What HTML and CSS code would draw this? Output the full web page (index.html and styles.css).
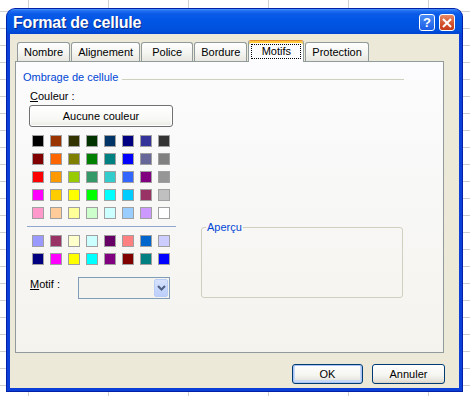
FILE: index.html
```html
<!DOCTYPE html>
<html lang="fr">
<head>
    <meta charset="UTF-8">
    <title>Format de cellule</title>
    <link rel="stylesheet" href="styles.css">
</head>
<body>
    <div class="dialog">
        <div class="titlebar">
            <span class="title">Format de cellule</span>
            <span class="tb-btn help">?</span>
            <span class="tb-btn close">
                <svg width="10" height="10" viewBox="0 0 10 10"><path d="M1 1 L9 9 M9 1 L1 9" stroke="#fff" stroke-width="2" fill="none"/></svg>
            </span>
        </div>
        <div class="content">
            <div class="tabs">
                <span class="tab">Nombre</span>
                <span class="tab">Alignement</span>
                <span class="tab">Police</span>
                <span class="tab">Bordure</span>
                <span class="tab active"><span class="focus">Motifs</span></span>
                <span class="tab">Protection</span>
            </div>
            <div class="panel">
                <div class="group-head"><span>Ombrage de cellule</span><i class="rule"></i></div>
                <div class="shade">
                    <div class="colors">
                        <div class="label"><u>C</u>ouleur :</div>
                        <button class="none-btn">Aucune couleur</button>
                        <div class="swatches">
                            <i style="background:#000000"></i><i style="background:#993300"></i><i style="background:#333300"></i><i style="background:#003300"></i><i style="background:#003366"></i><i style="background:#000080"></i><i style="background:#333399"></i><i style="background:#333333"></i>
                            <i style="background:#800000"></i><i style="background:#ff6600"></i><i style="background:#808000"></i><i style="background:#008000"></i><i style="background:#008080"></i><i style="background:#0000ff"></i><i style="background:#666699"></i><i style="background:#808080"></i>
                            <i style="background:#ff0000"></i><i style="background:#ff9900"></i><i style="background:#99cc00"></i><i style="background:#339966"></i><i style="background:#33cccc"></i><i style="background:#3366ff"></i><i style="background:#800080"></i><i style="background:#969696"></i>
                            <i style="background:#ff00ff"></i><i style="background:#ffcc00"></i><i style="background:#ffff00"></i><i style="background:#00ff00"></i><i style="background:#00ffff"></i><i style="background:#00ccff"></i><i style="background:#993366"></i><i style="background:#c0c0c0"></i>
                            <i style="background:#ff99cc"></i><i style="background:#ffcc99"></i><i style="background:#ffff99"></i><i style="background:#ccffcc"></i><i style="background:#ccffff"></i><i style="background:#99ccff"></i><i style="background:#cc99ff"></i><i style="background:#ffffff"></i>
                        </div>
                        <div class="sep"></div>
                        <div class="swatches extra">
                            <i style="background:#9999ff"></i><i style="background:#993366"></i><i style="background:#ffffcc"></i><i style="background:#ccffff"></i><i style="background:#660066"></i><i style="background:#ff8080"></i><i style="background:#0066cc"></i><i style="background:#ccccff"></i>
                            <i style="background:#000080"></i><i style="background:#ff00ff"></i><i style="background:#ffff00"></i><i style="background:#00ffff"></i><i style="background:#800080"></i><i style="background:#800000"></i><i style="background:#008080"></i><i style="background:#0000ff"></i>
                        </div>
                        <div class="motif">
                            <span class="label"><u>M</u>otif :</span>
                            <div class="combo">
                                <span class="arrow">
                                    <svg width="9" height="6" viewBox="0 0 9 6"><path d="M1 1 L4.5 4.5 L8 1" stroke="#4d6185" stroke-width="2" fill="none"/></svg>
                                </span>
                            </div>
                        </div>
                    </div>
                    <fieldset class="preview">
                        <legend>Aperçu</legend>
                    </fieldset>
                </div>
            </div>
            <div class="actions">
                <button class="btn default">OK</button>
                <button class="btn">Annuler</button>
            </div>
        </div>
    </div>
</body>
</html>
```

FILE: styles.css
```css
html, body {
    margin: 0;
}
body {
    width: 470px;
    height: 396px;
    overflow: hidden;
    position: relative;
    background-color: #fff;
    background-image:
        linear-gradient(to right, #d0d0d0 1px, transparent 1px),
        linear-gradient(to bottom, #d0d0d0 1px, transparent 1px);
    background-size: 80px 100%, 100% 17px;
    background-position: 28px 0, 0 11px;
    font-family: "Liberation Sans", Arial, sans-serif;
    font-size: 11px;
    color: #000;
}

/* window frame, floating over the sheet */
.dialog {
    position: absolute;
    left: 7px;
    top: 9px;
    width: 455px;
    height: 382px;
    box-sizing: border-box;
    display: flex;
    flex-direction: column;
    border-radius: 8px 8px 0 0;
    overflow: hidden;
    background: #0b3fd8;
    padding: 0 3px 3px 3px;
    box-shadow: 0 0 0 1px #0022a8;
}
.titlebar {
    height: 25px;
    margin: 0 -3px;
    display: flex;
    align-items: flex-start;
    padding: 0 7px 0 6px;
    background: linear-gradient(#4a94f8 0, #1e6cf0 2px, #0a5ae8 5px, #0055e4 50%, #0050dc 85%, #0044d2 100%);
}
.title {
    flex: 1;
    color: #fff;
    font-weight: bold;
    font-size: 16px;
    letter-spacing: -0.2px;
    line-height: 25px;
    margin-top: 1px;
    text-shadow: 1px 1px 0 #0a2a8a;
}
.tb-btn {
    width: 16px;
    height: 17px;
    margin-top: 5px;
    box-sizing: border-box;
    border: 1px solid #fff;
    border-radius: 3px;
    display: flex;
    align-items: center;
    justify-content: center;
}
.help {
    background: linear-gradient(#4a8cf8, #1c5ce6);
    color: #fff;
    font-weight: bold;
    font-size: 13px;
    margin-right: 4px;
}
.close {
    background: linear-gradient(#e88a68, #d2502c 60%, #c43c1c);
}

.content {
    flex: 1;
    background: #ece9d8;
    padding-top: 6px;
}

/* tabs */
.tabs {
    display: flex;
    align-items: flex-end;
    gap: 1px;
    margin-left: 7px;
    height: 21px;
}
.tab {
    position: relative;
    height: 19px;
    box-sizing: border-box;
    min-width: 52px;
    padding: 0 6px;
    text-align: center;
    line-height: 18px;
    border: 1px solid #919b9c;
    border-bottom: none;
    border-radius: 3px 3px 0 0;
    background: linear-gradient(#fff, #f3f3ef 60%, #e8e7e1);
}
.tab.active {
    height: 22px;
    min-width: 56px;
    padding: 0 2px;
    margin-bottom: -1px;
    z-index: 1;
    border-top: 1px solid #e68b2c;
    box-shadow: inset 0 2px 0 #ffc73c;
    background: #fcfcfe;
}
.focus {
    display: block;
    margin-top: 3px;
    padding: 0 9px;
    line-height: 13px;
    border: 1px dotted #000;
}

/* tab page */
.panel {
    width: 429px;
    height: 292px;
    box-sizing: border-box;
    margin-left: 5px;
    border: 1px solid #919b9c;
    background: linear-gradient(#fcfcfe, #f4f3ee);
    padding: 9px 39px 0 7px;
}
.group-head {
    display: flex;
    line-height: 13px;
    color: #0046d5;
}
.group-head .rule {
    flex: 1;
    height: 0;
    border-top: 1px solid #d0d0bf;
    margin: 8px 0 0 4px;
}
.shade {
    display: flex;
    align-items: flex-start;
    margin-left: 4px;
}
.colors {
    width: 149px;
}
.label {
    line-height: 13px;
}
.colors > .label {
    margin: 6px 0 0 3px;
}
.none-btn {
    display: block;
    margin: 2px 0 0 2px;
    width: 144px;
    height: 22px;
    padding: 0;
    font: inherit;
    color: #000;
    border: 1px solid #707070;
    border-radius: 3px;
    background: linear-gradient(#fff, #f7f7f4 70%, #ecebe6);
    box-shadow: inset 0 0 0 1px #fff;
}
.swatches {
    display: grid;
    grid-template-columns: repeat(8, 12px);
    grid-auto-rows: 12px;
    gap: 6px;
    margin: 8px 0 0 5px;
}
.swatches i {
    box-sizing: border-box;
    border: 1px solid #a0a0a0;
}
.sep {
    height: 0;
    border-top: 1px solid #8fa6cf;
    margin-top: 7px;
}
.swatches.extra {
    margin-top: 8px;
}
.motif {
    display: flex;
    align-items: flex-start;
    margin-top: 12px;
}
.motif .label {
    width: 48px;
    margin: 1px 0 0 3px;
}
.combo {
    width: 92px;
    height: 22px;
    box-sizing: border-box;
    border: 1px solid #7f9db9;
    padding: 1px;
    display: flex;
    justify-content: flex-end;
    background: #f4f3ee;
}
.arrow {
    width: 14px;
    height: 18px;
    box-sizing: border-box;
    border: 1px solid #b9cdf6;
    border-radius: 2px;
    background: linear-gradient(#d6e2fd, #bccefa);
    display: flex;
    align-items: center;
    justify-content: center;
}
.preview {
    margin: 137px 0 0 25px;
    padding: 0;
    width: 202px;
    height: 77px;
    box-sizing: border-box;
    min-width: 0;
    border: 1px solid #d0d0bf;
    border-radius: 3px;
}
.preview legend {
    margin-left: 4px;
    padding: 0 1px;
    color: #0046d5;
    line-height: 13px;
}

/* OK / Annuler */
.actions {
    display: flex;
    justify-content: flex-end;
    gap: 9px;
    margin-top: 11px;
    padding-right: 14px;
}
.btn {
    height: 20px;
    width: 73px;
    padding: 0;
    font: inherit;
    color: #000;
    border: 1px solid #003c74;
    border-radius: 3px;
    background: linear-gradient(#fff, #f4f4f0 60%, #e3e1d8 90%, #d6d0c5);
}
.btn.default {
    width: 71px;
    box-shadow: inset 0 0 0 1px #a9c4f3, inset 0 -1px 0 2px #c7d9f9;
}
```
